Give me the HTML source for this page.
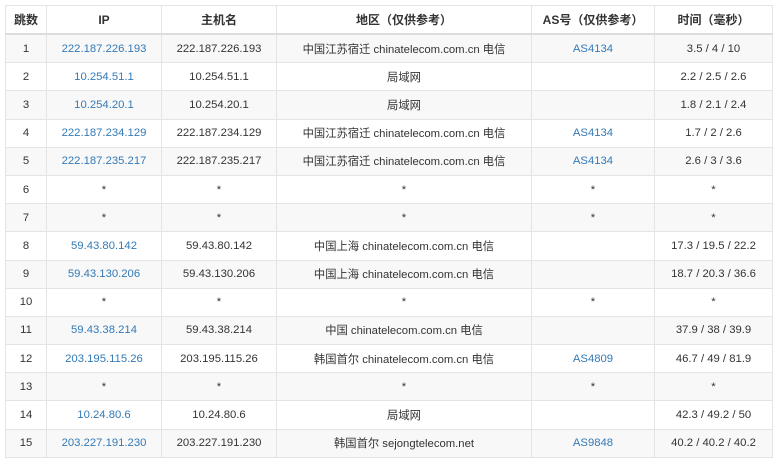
<!DOCTYPE html>
<html><head><meta charset="utf-8"><style>
body{margin:0;background:#fff;font-family:"Liberation Sans","Noto Sans CJK SC",sans-serif;}
table{position:absolute;left:5px;top:5px;border-collapse:collapse;width:767px;font-size:11.3px;color:#333;table-layout:fixed;}
td,th{border:1px solid #e4e4e4;text-align:center;height:27.2px;padding:0;white-space:nowrap;}
th{font-weight:bold;height:27px;border-bottom:2px solid #ddd;font-size:12px;}
tbody tr:nth-child(odd){background:#f8f8f8;}
a{color:#337ab7;text-decoration:none;}
</style></head><body>
<table>
<colgroup><col style="width:41px"><col style="width:115px"><col style="width:115px"><col style="width:255px"><col style="width:123px"><col style="width:118px"></colgroup>
<thead><tr><th>跳数</th><th>IP</th><th>主机名</th><th>地区（仅供参考）</th><th>AS号（仅供参考）</th><th>时间（毫秒）</th></tr></thead>
<tbody>
<tr><td>1</td><td><a>222.187.226.193</a></td><td>222.187.226.193</td><td>中国江苏宿迁 chinatelecom.com.cn 电信</td><td><a>AS4134</a></td><td>3.5 / 4 / 10</td></tr>
<tr><td>2</td><td><a>10.254.51.1</a></td><td>10.254.51.1</td><td>局域网</td><td></td><td>2.2 / 2.5 / 2.6</td></tr>
<tr><td>3</td><td><a>10.254.20.1</a></td><td>10.254.20.1</td><td>局域网</td><td></td><td>1.8 / 2.1 / 2.4</td></tr>
<tr><td>4</td><td><a>222.187.234.129</a></td><td>222.187.234.129</td><td>中国江苏宿迁 chinatelecom.com.cn 电信</td><td><a>AS4134</a></td><td>1.7 / 2 / 2.6</td></tr>
<tr><td>5</td><td><a>222.187.235.217</a></td><td>222.187.235.217</td><td>中国江苏宿迁 chinatelecom.com.cn 电信</td><td><a>AS4134</a></td><td>2.6 / 3 / 3.6</td></tr>
<tr><td>6</td><td>*</td><td>*</td><td>*</td><td>*</td><td>*</td></tr>
<tr><td>7</td><td>*</td><td>*</td><td>*</td><td>*</td><td>*</td></tr>
<tr><td>8</td><td><a>59.43.80.142</a></td><td>59.43.80.142</td><td>中国上海 chinatelecom.com.cn 电信</td><td></td><td>17.3 / 19.5 / 22.2</td></tr>
<tr><td>9</td><td><a>59.43.130.206</a></td><td>59.43.130.206</td><td>中国上海 chinatelecom.com.cn 电信</td><td></td><td>18.7 / 20.3 / 36.6</td></tr>
<tr><td>10</td><td>*</td><td>*</td><td>*</td><td>*</td><td>*</td></tr>
<tr><td>11</td><td><a>59.43.38.214</a></td><td>59.43.38.214</td><td>中国 chinatelecom.com.cn 电信</td><td></td><td>37.9 / 38 / 39.9</td></tr>
<tr><td>12</td><td><a>203.195.115.26</a></td><td>203.195.115.26</td><td>韩国首尔 chinatelecom.com.cn 电信</td><td><a>AS4809</a></td><td>46.7 / 49 / 81.9</td></tr>
<tr><td>13</td><td>*</td><td>*</td><td>*</td><td>*</td><td>*</td></tr>
<tr><td>14</td><td><a>10.24.80.6</a></td><td>10.24.80.6</td><td>局域网</td><td></td><td>42.3 / 49.2 / 50</td></tr>
<tr><td>15</td><td><a>203.227.191.230</a></td><td>203.227.191.230</td><td>韩国首尔 sejongtelecom.net</td><td><a>AS9848</a></td><td>40.2 / 40.2 / 40.2</td></tr>
</tbody></table>
</body></html>
